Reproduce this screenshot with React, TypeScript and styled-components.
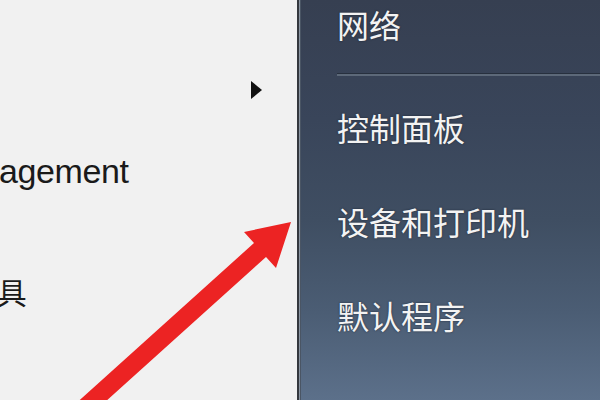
import styled, { createGlobalStyle } from "styled-components";

const GlobalStyle = createGlobalStyle`
  html, body {
    margin: 0;
    padding: 0;
  }
  body {
    font-family: "Liberation Sans", "Noto Sans CJK SC", sans-serif;
  }
`;

const Screen = styled.div`
  position: relative;
  width: 600px;
  height: 400px;
  display: flex;
  overflow: hidden;
`;

const LeftPane = styled.div`
  width: 297px;
  flex-shrink: 0;
  background: #f1f1f1;
  border-right: 2px solid #34383e;
  display: flex;
  flex-direction: column;
  padding-top: 81px;
  overflow: hidden;
`;

const SubArrow = styled.div`
  align-self: flex-end;
  margin-right: 35px;
  width: 0;
  height: 0;
  border-top: 9px solid transparent;
  border-bottom: 9px solid transparent;
  border-left: 11px solid #111;
`;

const LeftLabel = styled.div<{ $shift: number; $size: number; $top: number }>`
  margin-top: ${(p) => p.$top}px;
  margin-left: ${(p) => -p.$shift}px;
  white-space: nowrap;
  font-family: "Liberation Sans", "Noto Sans CJK SC", sans-serif;
  font-size: ${(p) => p.$size}px;
  line-height: ${(p) => p.$size}px;
  letter-spacing: -0.4px;
  color: #1a1a1a;
`;

const RightPane = styled.div`
  flex: 1;
  display: flex;
  flex-direction: column;
  padding-top: 4px;
  padding-left: 38px;
  background: linear-gradient(
    180deg,
    #363f51 0%,
    #39455a 30%,
    #3f4e62 55%,
    #4b5d74 78%,
    #5c708a 100%
  );
  box-shadow: inset 1px 0 0 #8a95a2, inset 2px 0 0 #4a5564;
`;

const MenuItem = styled.div<{ $top?: number }>`
  margin-top: ${(p) => p.$top ?? 0}px;
  height: 40px;
  line-height: 40px;
  font-family: "Noto Sans CJK SC", sans-serif;
  font-size: 32px;
  color: #f3f3f3;
  text-shadow: 0 0 2px rgba(20, 28, 40, 0.8);
  white-space: nowrap;
`;

const Separator = styled.div`
  margin-top: 29px;
  height: 1px;
  background: #27303e;
  border-bottom: 2px solid #5d6979;
`;

const ArrowLayer = styled.svg`
  position: absolute;
  inset: 0;
  pointer-events: none;
`;

export default function App() {
  return (
    <>
      <GlobalStyle />
      <Screen>
        <LeftPane>
          <SubArrow />
          <LeftLabel $top={55} $size={34} $shift={66}>
            Management
          </LeftLabel>
          <LeftLabel $top={91} $size={30} $shift={92}>
            管理工具
          </LeftLabel>
        </LeftPane>
        <RightPane>
          <MenuItem>网络</MenuItem>
          <Separator />
          <MenuItem $top={31}>控制面板</MenuItem>
          <MenuItem $top={54}>设备和打印机</MenuItem>
          <MenuItem $top={54}>默认程序</MenuItem>
        </RightPane>
        <ArrowLayer width="600" height="400" viewBox="0 0 600 400">
          <polygon
            points="291,222 276,268 266,257 74,430 62,416 254,243 244,232"
            fill="#ec2323"
          />
        </ArrowLayer>
      </Screen>
    </>
  );
}
